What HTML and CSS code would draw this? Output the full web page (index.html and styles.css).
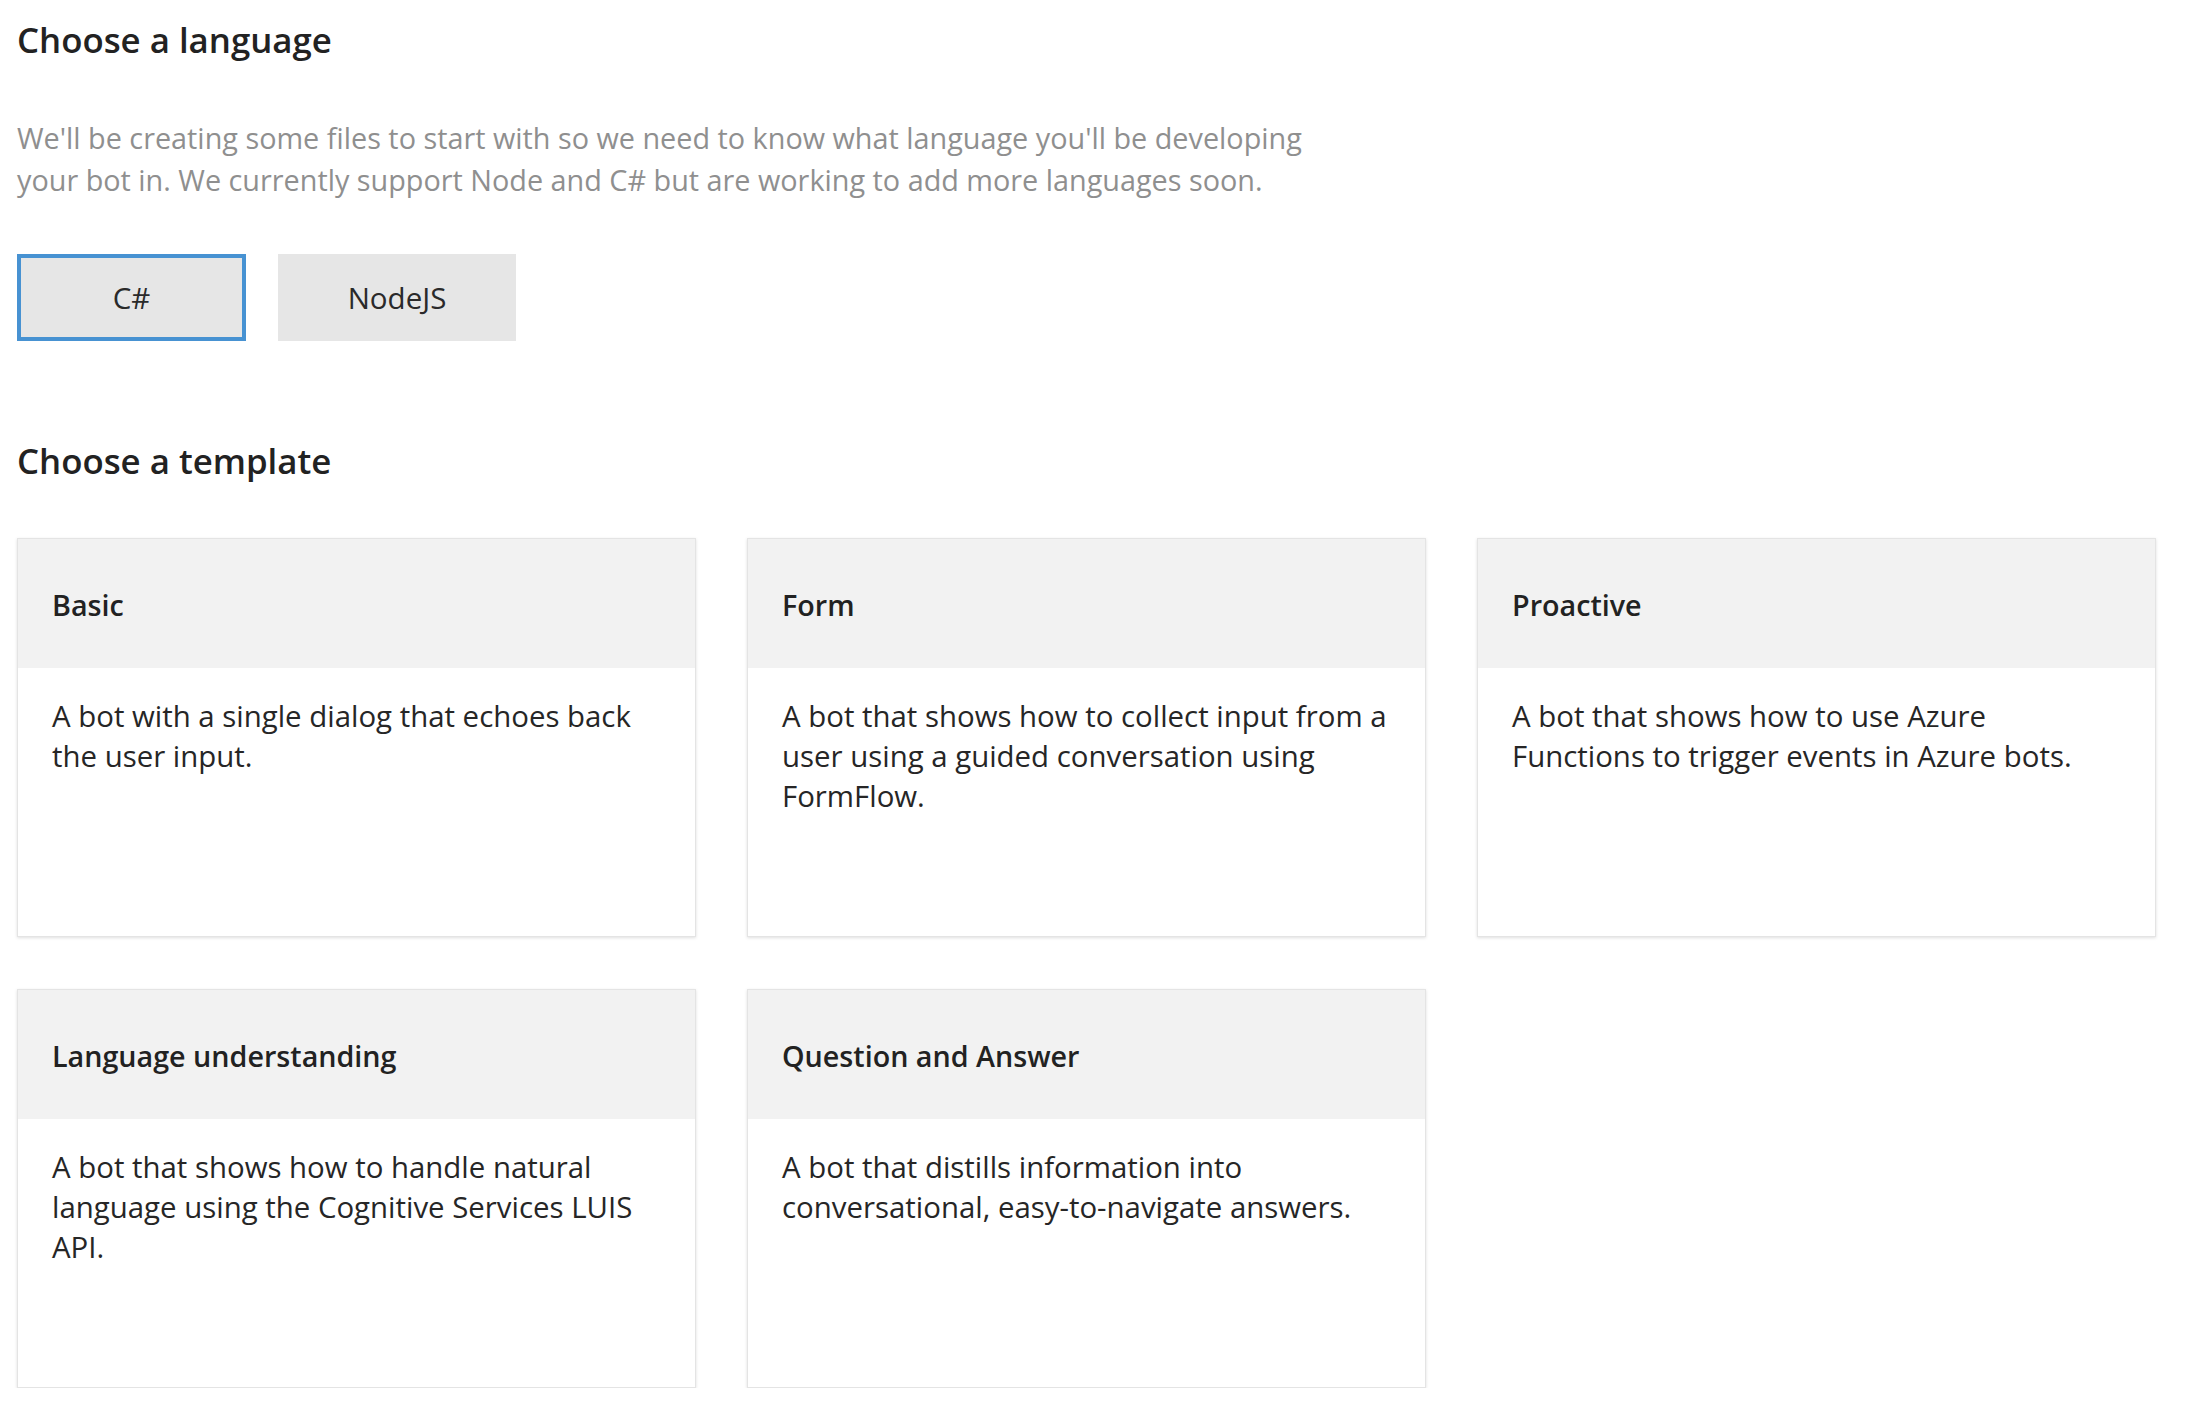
FILE: index.html
```html
<!DOCTYPE html>
<html lang="en">
<head>
<meta charset="utf-8">
<title>Choose a language and template</title>
<link rel="stylesheet" href="styles.css">
</head>
<body>
<main class="page">
  <section class="section">
    <h1 class="heading">Choose a language</h1>
    <p class="intro">We'll be creating some files to start with so we need to know what language you'll be developing your bot in. We currently support Node and C# but are working to add more languages soon.</p>
    <div class="lang-buttons">
      <button class="lang-btn lang-btn--selected" type="button">C#</button>
      <button class="lang-btn lang-btn--node" type="button">NodeJS</button>
    </div>
  </section>
  <section class="section section--templates">
    <h2 class="heading heading--templates">Choose a template</h2>
    <div class="template-grid">
      <div class="card">
        <div class="card-header">Basic</div>
        <div class="card-body">A bot with a single dialog that echoes back the user input.</div>
      </div>
      <div class="card">
        <div class="card-header">Form</div>
        <div class="card-body">A bot that shows how to collect input from a user using a guided conversation using FormFlow.</div>
      </div>
      <div class="card">
        <div class="card-header">Proactive</div>
        <div class="card-body">A bot that shows how to use Azure Functions to trigger events in Azure bots.</div>
      </div>
      <div class="card">
        <div class="card-header">Language understanding</div>
        <div class="card-body">A bot that shows how to handle natural language using the Cognitive Services LUIS API.</div>
      </div>
      <div class="card">
        <div class="card-header">Question and Answer</div>
        <div class="card-body">A bot that distills information into conversational, easy-to-navigate answers.</div>
      </div>
    </div>
  </section>
</main>
</body>
</html>
```
FILE: styles.css
```css
html, body {
  margin: 0;
  padding: 0;
  background: #ffffff;
}

body {
  font-family: "Open Sans", "Noto Sans", sans-serif;
  color: #252525;
}

.page {
  padding: 15.5px 0 0 17px;
}

.heading {
  margin: 0;
  font-size: 34.8px;
  line-height: 48px;
  font-weight: 600;
  color: #222222;
}

.intro {
  margin: 53px 0 0 0;
  max-width: 1300px;
  font-size: 28.8px;
  line-height: 42px;
  font-weight: 400;
  color: #8f8f8f;
}

.lang-buttons {
  display: flex;
  gap: 32px;
  margin-top: 53px;
}

.lang-btn {
  box-sizing: border-box;
  height: 87px;
  display: flex;
  align-items: center;
  justify-content: center;
  padding: 0;
  border: none;
  background: #e6e6e6;
  font-family: "Open Sans", "Noto Sans", sans-serif;
  font-size: 29.5px;
  font-weight: 400;
  color: #2a2a2a;
}

.lang-btn--selected {
  width: 229px;
  border: 4px solid #4792d2;
}

.lang-btn--node {
  width: 238px;
}

.section--templates {
  margin-top: 96px;
}

.template-grid {
  display: grid;
  grid-template-columns: repeat(3, 679px);
  grid-auto-rows: 399px;
  column-gap: 51px;
  row-gap: 52px;
  margin-top: 53px;
}

.card {
  box-sizing: border-box;
  border: 1px solid #e4e4e4;
  box-shadow: 0 1px 3px rgba(0, 0, 0, 0.13);
  background: #ffffff;
  display: flex;
  flex-direction: column;
}

.card-header {
  background: #f2f2f2;
  padding: 46px 34px 43px 34px;
  font-size: 28.7px;
  line-height: 40px;
  font-weight: 600;
  color: #222222;
}

.card-body {
  padding: 28.5px 34px 0 34px;
  font-size: 29.4px;
  line-height: 40px;
  font-weight: 400;
  color: #262626;
}
```
